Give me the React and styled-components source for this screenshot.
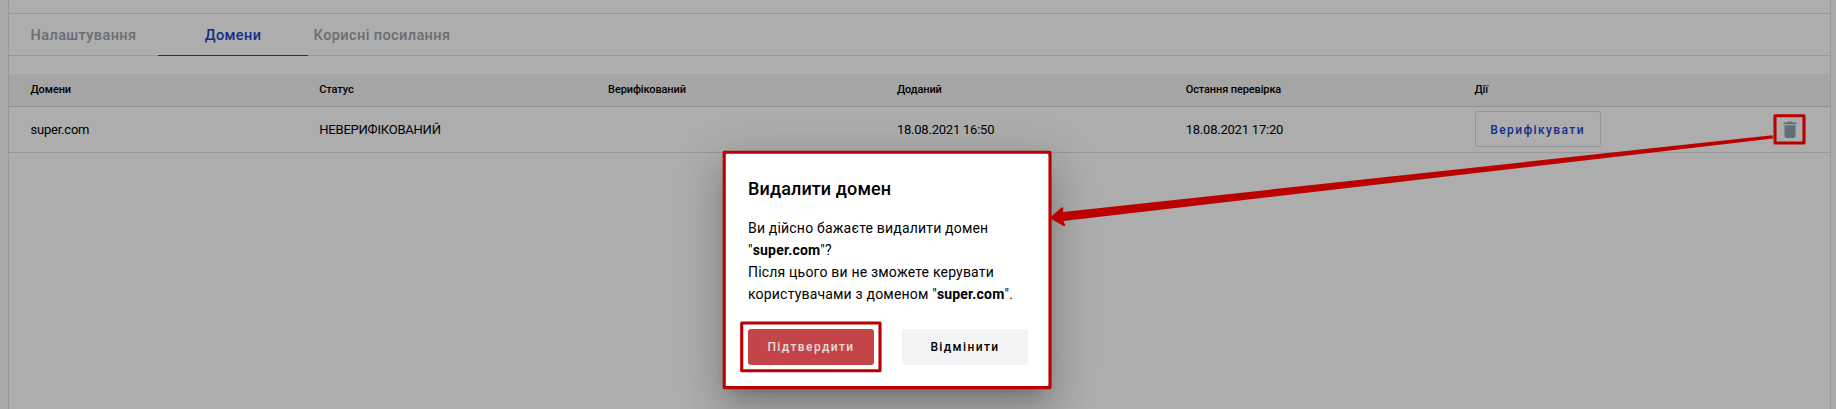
import React from 'react';
import styled, { createGlobalStyle } from 'styled-components';

const GlobalStyle = createGlobalStyle`
  * { box-sizing: border-box; }
  body {
    margin: 0;
    overflow: hidden;
    background: #fafafa;
    color: #000;
    font-family: Roboto, "Noto Sans", sans-serif;
  }
`;

const Page = styled.div`
  position: relative;
  height: 409px;
  padding: 0 5px 0 8px;
  overflow: hidden;
`;

const Panel = styled.main`
  height: 100%;
  padding-top: 13px;
  background: #fff;
  border: solid #e0e0e0;
  border-width: 0 1px;
`;

const Tabs = styled.nav`
  display: flex;
  height: 43px;
  border: solid #e0e0e0;
  border-width: 1px 0;
`;

const Tab = styled.button`
  width: ${(p) => p.$width}px;
  height: 42px;
  padding: 3px 0 0;
  border: 0;
  border-bottom: 1px solid ${(p) => (p.$active ? '#1c46c8' : 'transparent')};
  background: none;
  color: ${(p) => (p.$active ? '#1c46c8' : '#9ca3ab')};
  font: 500 14.5px/20px Roboto, sans-serif;
  letter-spacing: 0.4px;
  white-space: nowrap;
`;

const Table = styled.section`
  margin-top: 18px;
`;

const Row = styled.div`
  display: grid;
  grid-template-columns: repeat(6, 288.8px) 1fr;
  align-items: center;
  height: ${(p) => (p.$head ? 33 : 46)}px;
  padding: 0 0 ${(p) => (p.$head ? 2 : 0)}px 21.5px;
  background: ${(p) => (p.$head ? '#f4f4f4' : '#fff')};
  border-bottom: 1px solid ${(p) => (p.$head ? '#d4d4d4' : '#e0e0e0')};
  font-size: ${(p) => (p.$head ? 11 : 13)}px;
  font-weight: ${(p) => (p.$head ? 500 : 400)};
  letter-spacing: ${(p) => (p.$head ? -0.12 : -0.22)}px;
`;

const Action = styled.div`
  display: flex;
  padding: 0 0 2px 0.6px;

  button {
    padding: 2px 1px 0 0;
  }
`;

const Button = styled.button`
  width: 126px;
  height: 36px;
  padding: 0;
  border: 1px solid ${(p) => p.$border || 'transparent'};
  border-radius: 3px;
  background: ${(p) => p.$bg || 'transparent'};
  color: ${(p) => p.$color};
  font: 500 12px/16px Roboto, sans-serif;
  letter-spacing: 1.4px;
`;

const IconButton = styled.button`
  display: flex;
  width: 22px;
  height: 22px;
  margin-left: 16px;
  padding: 0;
  border: 0;
  background: none;
`;

const Overlay = styled.div`
  position: absolute;
  inset: 0;
  display: flex;
  justify-content: center;
  align-items: flex-start;
  padding: 153px 62px 0 0;
  background: rgba(0, 0, 0, 0.32);
`;

const Dialog = styled.section`
  width: 324px;
  height: 234px;
  padding: 25px 21px 0 23px;
  border-radius: 4px;
  background: #fff;
  box-shadow: 0 11px 15px -7px rgba(0, 0, 0, 0.2),
    0 24px 38px 3px rgba(0, 0, 0, 0.14), 0 9px 46px 8px rgba(0, 0, 0, 0.12);
`;

const Title = styled.h2`
  margin: 0;
  font-size: 18px;
  line-height: 22px;
  font-weight: 500;
  letter-spacing: 0.12px;
`;

const Message = styled.p`
  margin: 17px 0 0;
  font-size: 14px;
  line-height: 22px;
  letter-spacing: 0.19px;
  white-space: nowrap;
`;

const Actions = styled.div`
  display: flex;
  gap: 28px;
  margin-top: 24px;
`;

const Annotations = styled.svg`
  position: absolute;
  inset: 0;
  width: 1836px;
  height: 409px;
  pointer-events: none;
`;

const Markup = () => (
  <Annotations viewBox="0 0 1836 409" aria-hidden="true">
    <g fill="none" stroke="#bb0000" strokeWidth="3.1" strokeLinejoin="round">
      <rect x="724.2" y="152.2" width="325.8" height="235.4" />
      <rect x="741.7" y="323" width="138.3" height="47.8" />
      <rect x="1775" y="115.8" width="29" height="27.2" />
    </g>
    <path
      fill="#bb0000"
      d="M1049.5 218L1061.5 207.5L1063.3 207.5L1063 212L1772.5 135.2L1773 138.6L1063.5 221L1065.3 225.5L1064 226.3Z"
    />
  </Annotations>
);

const columns = ['Домени', 'Статус', 'Верифікований', 'Доданий', 'Остання перевірка', 'Дії'];

export default function App() {
  return (
    <Page>
      <GlobalStyle />
      <Panel>
        <Tabs>
          <Tab $width={149}>Налаштування</Tab>
          <Tab $width={150} $active>Домени</Tab>
          <Tab $width={148}>Корисні посилання</Tab>
        </Tabs>
        <Table>
          <Row $head>
            {columns.map((name) => <span key={name}>{name}</span>)}
          </Row>
          <Row>
            <span>super.com</span>
            <span>НЕВЕРИФІКОВАНИЙ</span>
            <span />
            <span>18.08.2021 16:50</span>
            <span>18.08.2021 17:20</span>
            <Action><Button $border="#dadce0" $color="#1c46c8">Верифікувати</Button></Action>
            <IconButton aria-label="Видалити">
              <svg width="22" height="22" viewBox="0 0 22 22" fill="#96a1ad">
                <path d="M4.5 3.5H8L9 2.5H13L14 3.5H17.5V5.3H4.5ZM5.5 6.3H16.5V17Q16.5 19 14.5 19H7.5Q5.5 19 5.5 17Z" />
              </svg>
            </IconButton>
          </Row>
        </Table>
      </Panel>
      <Overlay>
        <Dialog role="dialog">
          <Title>Видалити домен</Title>
          <Message>
            Ви дійсно бажаєте видалити домен<br />
            "<b>super.com</b>"?<br />
            Після цього ви не зможете керувати<br />
            користувачами з доменом "<b>super.com</b>".
          </Message>
          <Actions>
            <Button $bg="#c44548" $color="#e3dede">Підтвердити</Button>
            <Button $bg="#f3f4f6" $color="#000">Відмінити</Button>
          </Actions>
        </Dialog>
      </Overlay>
      <Markup />
    </Page>
  );
}
